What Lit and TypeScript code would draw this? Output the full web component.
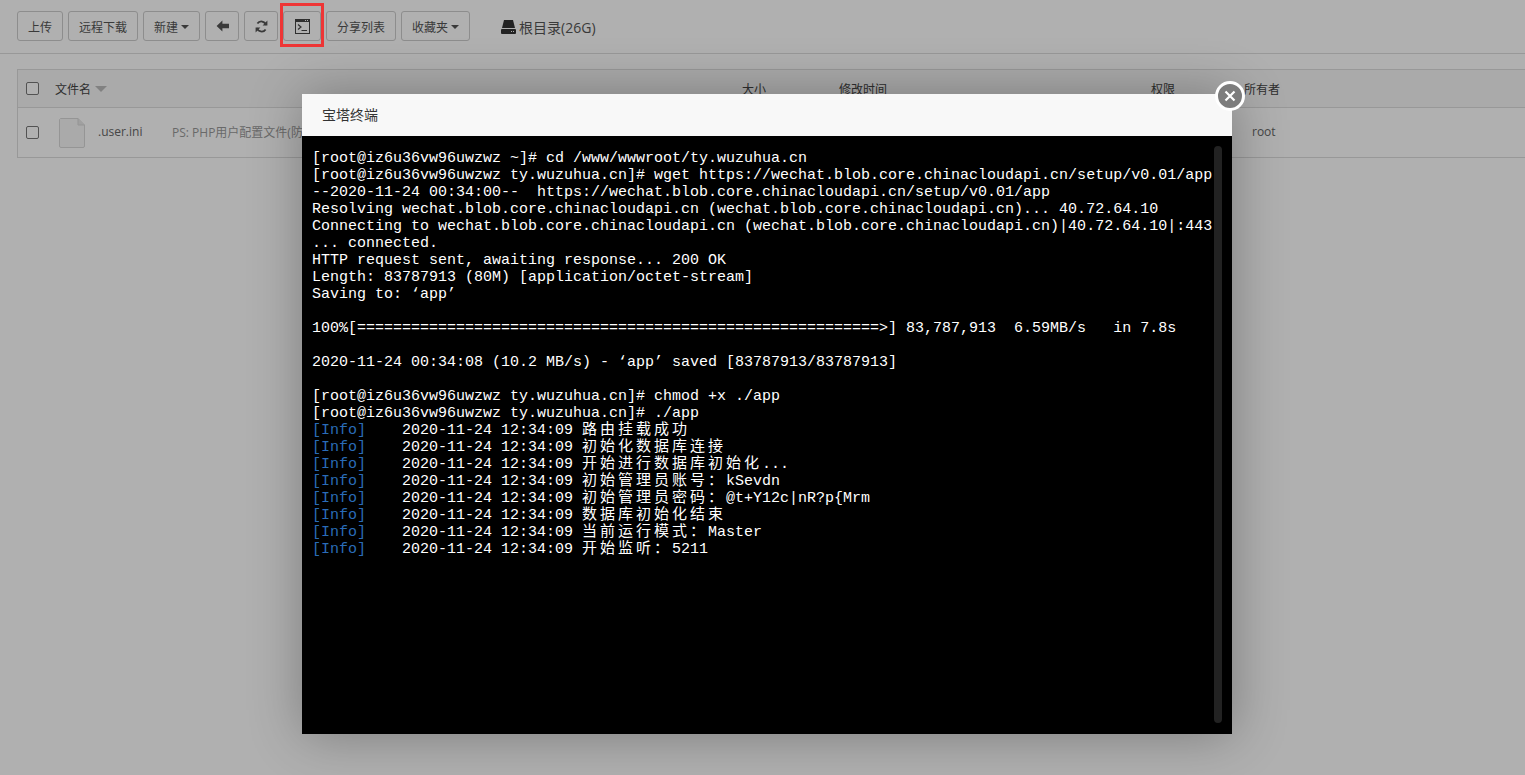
import { LitElement, html, css } from "lit";
import { customElement } from "lit/decorators.js";

const prompt = "[root@iz6u36vw96uwzwz ";
const lines = [
  prompt.trimEnd() + " ~]# cd /www/wwwroot/ty.wuzuhua.cn",
  prompt + "ty.wuzuhua.cn]# wget https://wechat.blob.core.chinacloudapi.cn/setup/v0.01/app",
  "--2020-11-24 00:34:00--  https://wechat.blob.core.chinacloudapi.cn/setup/v0.01/app",
  "Resolving wechat.blob.core.chinacloudapi.cn (wechat.blob.core.chinacloudapi.cn)... 40.72.64.10",
  "Connecting to wechat.blob.core.chinacloudapi.cn (wechat.blob.core.chinacloudapi.cn)|40.72.64.10|:443",
  "... connected.",
  "HTTP request sent, awaiting response... 200 OK",
  "Length: 83787913 (80M) [application/octet-stream]",
  "Saving to: ‘app’",
  "",
  "100%[" + "=".repeat(58) + ">] 83,787,913  6.59MB/s   in 7.8s",
  "",
  "2020-11-24 00:34:08 (10.2 MB/s) - ‘app’ saved [83787913/83787913]",
  "",
  prompt + "ty.wuzuhua.cn]# chmod +x ./app",
  prompt + "ty.wuzuhua.cn]# ./app",
];

const infos: [string, string][] = [
  ["路由挂载成功", ""],
  ["初始化数据库连接", ""],
  ["开始进行数据库初始化", "..."],
  ["初始管理员账号：", "kSevdn"],
  ["初始管理员密码：", "@t+Y12c|nR?p{Mrm"],
  ["数据库初始化结束", ""],
  ["当前运行模式：", "Master"],
  ["开始监听：", "5211"],
];

const caret = html`<span class="caret"></span>`;

@customElement("app-root")
export class AppRoot extends LitElement {
  static styles = css`
    :host {
      display: block;
      position: relative;
      height: 775px;
      overflow: hidden;
      background: #fff;
      font-family: "Open Sans", "Noto Sans CJK SC", sans-serif;
      font-size: 12px;
      color: #555;
    }
    .toolbar {
      display: flex;
      align-items: center;
      gap: 5px;
      height: 53px;
      padding: 0 0 0 17px;
      box-sizing: content-box;
      border-bottom: 1px solid #ddd;
    }
    .btn {
      display: flex;
      align-items: center;
      justify-content: center;
      gap: 3px;
      height: 30px;
      box-sizing: border-box;
      padding: 0 10px;
      border: 1px solid #ccc;
      border-radius: 3px;
      background: #fff;
      white-space: nowrap;
      margin-top: -1px;
    }
    .btn span.t { position: relative; top: 1px; }
    .icon-btn { width: 34px; padding: 0; }
    .term-btn { width: 38px; padding: 0; }
    .caret {
      width: 0;
      height: 0;
      margin-top: 1px;
      border-left: 4px solid transparent;
      border-right: 4px solid transparent;
      border-top: 4px solid #555;
    }
    .crumb {
      display: flex;
      align-items: center;
      gap: 3px;
      margin-left: 26px;
      font-size: 14px;
      color: #555;
    }
    .table {
      margin: 15px 0 0 17px;
      border: 1px solid #ddd;
      border-right: none;
    }
    .head {
      display: grid;
      grid-template-columns: 37px 687px 97px 312px 93px 1fr;
      align-items: center;
      height: 37px;
      background: #f6f6f6;
      border-bottom: 1px solid #ddd;
      color: #444;
    }
    .row {
      display: grid;
      grid-template-columns: 37px 43px 74px 1080px 1fr;
      align-items: center;
      height: 49px;
      box-sizing: border-box;
      padding-bottom: 2px;
      color: #666;
    }
    .check {
      width: 13px;
      height: 13px;
      margin-left: 8px;
      border: 1px solid #777;
      border-radius: 2px;
      background: #fff;
      box-sizing: border-box;
    }
    .row .check { margin-top: 2px; }
    .name { display: flex; align-items: center; gap: 4px; }
    .sort {
      width: 0;
      height: 0;
      margin-top: 1px;
      border-left: 6px solid transparent;
      border-right: 6px solid transparent;
      border-top: 6px solid #bbb;
    }
    .ps { color: #999; white-space: nowrap; overflow: hidden; }
    .file { display: block; margin: 2px 0 0 4px; }
    .overlay {
      position: absolute;
      inset: 0;
      background: rgba(0, 0, 0, 0.31);
    }
    .highlight {
      position: absolute;
      left: 280px;
      top: 3px;
      width: 44px;
      height: 44px;
      box-sizing: border-box;
      border: 3px solid #ee3535;
    }
    .modal {
      position: absolute;
      left: 302px;
      top: 94px;
      width: 930px;
      height: 640px;
      display: flex;
      flex-direction: column;
      box-shadow: 1px 1px 50px rgba(0, 0, 0, 0.3);
    }
    .title {
      height: 42px;
      line-height: 42px;
      padding-left: 20px;
      background: #f8f8f8;
      color: #333;
      font-size: 14px;
      flex: none;
    }
    .close {
      position: absolute;
      right: -13px;
      top: -13px;
      width: 30px;
      height: 30px;
      box-sizing: border-box;
      border: 3px solid #fff;
      border-radius: 50%;
      background: #7d7d7d;
      display: flex;
      align-items: center;
      justify-content: center;
    }
    .term {
      flex: 1;
      position: relative;
      background: #000;
      padding: 14px 0 0 10px;
      color: #fff;
      font-family: "Liberation Mono", "Noto Sans CJK SC", monospace;
      font-size: 15px;
      line-height: 17px;
    }
    .line { height: 17px; white-space: pre; }
    .info { color: #2a6cb8; }
    .cjk {
      font-family: "Noto Sans CJK SC", sans-serif;
      letter-spacing: 3px;
      font-size: 15px;
      line-height: 0;
    }
    .bar {
      position: absolute;
      left: 912px;
      top: 10px;
      bottom: 11px;
      width: 8px;
      border-radius: 4px;
      background: #222;
    }
  `;

  render() {
    return html`
      <div class="toolbar">
        <div class="btn"><span class="t">上传</span></div>
        <div class="btn"><span class="t">远程下载</span></div>
        <div class="btn"><span class="t">新建</span>${caret}</div>
        <div class="btn icon-btn">
          <svg width="13" height="12" viewBox="0 0 13 12"><path fill="#555" d="M6.4 0.6 0.6 6l5.8 5.4V8.2H13V3.8H6.4z"/></svg>
        </div>
        <div class="btn icon-btn">
          <svg width="13" height="13" viewBox="0 0 13 13" fill="none" stroke="#555" stroke-width="1.8"><path d="M11 5a4.8 4.8 0 0 0-8.6-1.4M2 8a4.8 4.8 0 0 0 8.6 1.4"/><path fill="#555" stroke="none" d="M12.4 0.6v4.8H7.6zM0.6 12.4V7.6h4.8z"/></svg>
        </div>
        <div class="btn term-btn">
          <svg width="15" height="15" viewBox="0 0 15 15" fill="none" stroke="#444"><rect x="0.5" y="0.5" width="14" height="14" fill="#fff"/><path fill="#444" stroke="none" d="M0 0h15v3H0z"/><path fill="#fff" stroke="none" d="M10 1h1v1h-1zM12 1h1v1h-1z"/><path d="M3 5.5 6 8 3 10.5M6.5 11.5H12" stroke-width="1.2"/></svg>
        </div>
        <div class="btn"><span class="t">分享列表</span></div>
        <div class="btn"><span class="t">收藏夹</span>${caret}</div>
        <div class="crumb">
          <svg width="15" height="14" viewBox="0 0 15 14"><path fill="#333" d="M3 0h9l2 8H1z"/><path fill="#333" d="M1 9h13a1 1 0 0 1 1 1v3a1 1 0 0 1-1 1H1a1 1 0 0 1-1-1v-3a1 1 0 0 1 1-1z"/><path fill="#fff" d="M10 11h1v1h-1zM12 11h1v1h-1z"/></svg>
          <span>根目录(26G)</span>
        </div>
      </div>
      <div class="table">
        <div class="head">
          <div class="check"></div>
          <div class="name">文件名<span class="sort"></span></div>
          <div>大小</div>
          <div>修改时间</div>
          <div>权限</div>
          <div>所有者</div>
        </div>
        <div class="row">
          <div class="check"></div>
          <svg class="file" width="26" height="30" viewBox="0 0 26 30" fill="#f6f6f6" stroke="#d8d8d8"><path d="M1.5 0.5H19L25.5 7V28a1.5 1.5 0 0 1-1.5 1.5H2A1.5 1.5 0 0 1 .5 28V1.5z"/><path d="M19 0.5V7h6.5" fill="#e8e8e8"/></svg>
          <div>.user.ini</div>
          <div class="ps">PS: PHP用户配置文件(防跨站)</div>
          <div>root</div>
        </div>
      </div>
      <div class="overlay"></div>
      <div class="highlight"></div>
      <div class="modal">
        <div class="title">宝塔终端</div>
        <div class="close">
          <svg width="14" height="14" viewBox="0 0 14 14" stroke="#fff" stroke-width="2.2"><path d="M2.5 2.5 11.5 11.5M11.5 2.5 2.5 11.5"/></svg>
        </div>
        <div class="term">
          ${lines.map((l) => html`<div class="line">${l}</div>`)}
          ${infos.map(
            ([zh, rest]) => html`<div class="line"><span class="info">[Info]</span>    2020-11-24 12:34:09 <span class="cjk">${zh}</span>${rest}</div>`
          )}
          <div class="bar"></div>
        </div>
      </div>
    `;
  }
}
